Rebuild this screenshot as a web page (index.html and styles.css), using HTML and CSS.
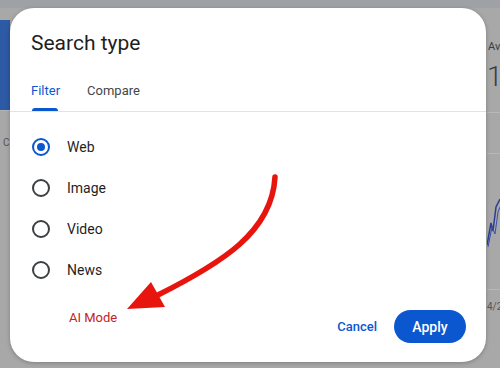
FILE: index.html
```html
<!DOCTYPE html>
<html>
<head>
  <title>Search type</title>
  <link rel="stylesheet" href="styles.css">
</head>
<body>
  <div class="backdrop">
    <div class="topbar"></div>
    <div class="main">
      <div class="left-col">
        <div class="left-header"></div>
        <div class="left-label">C</div>
      </div>
      <div class="right-col">
        <div class="stat-label">Av</div>
        <div class="stat-value">1</div>
        <div class="rule"></div>
        <div class="rule gap-lg"></div>
        <div class="chart">
          <svg width="13" height="50" viewBox="0 0 13 50">
            <path d="M0 48 L4 26 L6 34 L9 10 L13 2" fill="none" stroke="#2c3f8f" stroke-width="1.5"/>
            <path d="M1 50 L5 30 L8 37 L11 15 L13 10" fill="none" stroke="#3a4fa8" stroke-width="1"/>
          </svg>
        </div>
        <div class="rule"></div>
        <div class="axis-label">4/2</div>
      </div>
    </div>
  </div>

  <div class="dialog">
    <h2 class="title">Search type</h2>
    <div class="tabs">
      <div class="tab active">Filter</div>
      <div class="tab">Compare</div>
    </div>
    <div class="options">
      <label class="option"><span class="radio checked"></span><span class="label">Web</span></label>
      <label class="option"><span class="radio"></span><span class="label">Image</span></label>
      <label class="option"><span class="radio"></span><span class="label">Video</span></label>
      <label class="option"><span class="radio"></span><span class="label">News</span></label>
    </div>
    <div class="footer">
      <span class="ai-mode">AI Mode</span>
      <div class="actions">
        <button class="btn-text">Cancel</button>
        <button class="btn-primary">Apply</button>
      </div>
    </div>
  </div>

  <svg class="annotation" width="500" height="368" viewBox="0 0 500 368">
    <path d="M275 177 C272 232 222 263 156 296" fill="none" stroke="#e8150f" stroke-width="5.5" stroke-linecap="round"/>
    <polygon points="127,309 151,282 165,307" fill="#e8150f"/>
  </svg>
</body>
</html>
```

FILE: styles.css
```css
body { margin: 0; font-family: Roboto, "Liberation Sans", sans-serif; background: #a8a8a8; overflow: hidden; }

.backdrop { height: 368px; display: flex; flex-direction: column; }
.topbar { height: 8px; background: #9ea2a6; }
.main { flex: 1; display: flex; justify-content: space-between; }
.left-col { width: 10px; padding-top: 12px; overflow: hidden; }
.left-header { height: 90px; background: #2d5aa4; border-bottom: 1px solid #b4b4b4; }
.left-label { font-size: 10px; line-height: 12px; color: #555; padding: 26px 0 0 3px; }
.right-col { width: 13px; padding-top: 32px; color: #3c3c3c; overflow: hidden; }
.stat-label { font-size: 11px; line-height: 13px; padding-left: 1px; white-space: nowrap; }
.stat-value { font-size: 28px; line-height: 30px; margin-top: 9px; font-weight: 300; }
.rule { height: 1px; background: #b8b8b8; margin-top: 20px; }
.rule.gap-lg { margin-top: 40px; }
.chart { height: 50px; margin-top: 43px; }
.chart + .rule { margin-top: 42px; }
.axis-label { font-size: 10px; line-height: 12px; padding-top: 11px; color: #555; white-space: nowrap; }

.dialog {
  position: absolute;
  left: 10px;
  top: 8px;
  width: 476px;
  height: 354px;
  box-sizing: border-box;
  background: #fff;
  border-radius: 24px;
  box-shadow: 0 1px 4px rgba(0, 0, 0, 0.25);
  display: flex;
  flex-direction: column;
}

.title {
  margin: 0;
  padding: 21px 21px 0;
  font-size: 21px;
  line-height: 28px;
  font-weight: 400;
  color: #1f1f1f;
}

.tabs {
  display: flex;
  gap: 27px;
  margin-top: 13px;
  padding: 0 21px;
  border-bottom: 1px solid #e3e3e3;
}
.tab {
  position: relative;
  height: 41px;
  line-height: 41px;
  font-size: 13px;
  color: #444746;
}
.tab.active { color: #0b57d0; }
.tab.active::after {
  content: "";
  position: absolute;
  left: 1px;
  right: 2px;
  bottom: 0;
  height: 3px;
  border-radius: 3px 3px 0 0;
  background: #0b57d0;
}

.options { padding: 14px 21px 0; }
.option { display: flex; align-items: center; height: 41px; }
.radio {
  width: 18px;
  height: 18px;
  box-sizing: border-box;
  margin-left: 1px;
  border: 2px solid #3c4043;
  border-radius: 50%;
  display: flex;
  align-items: center;
  justify-content: center;
}
.radio.checked { border-color: #0b57d0; }
.radio.checked::before {
  content: "";
  width: 8px;
  height: 8px;
  border-radius: 50%;
  background: #0b57d0;
}
.label { margin-left: 17px; font-size: 14px; color: #1f1f1f; }

.footer {
  margin-top: auto;
  display: flex;
  justify-content: space-between;
  align-items: flex-end;
  padding: 0 20px 19px 21px;
}
.ai-mode {
  align-self: flex-start;
  margin-left: 38px;
  font-size: 13px;
  line-height: 16px;
  color: #c5221f;
}
.actions { display: flex; align-items: center; }
.btn-text {
  background: none;
  border: none;
  padding: 0;
  margin-right: 17px;
  font-family: inherit;
  font-size: 13px;
  font-weight: 500;
  color: #0b57d0;
}
.btn-primary {
  width: 72px;
  height: 33px;
  border: none;
  border-radius: 17px;
  background: #0b57d0;
  color: #fff;
  font-family: inherit;
  font-size: 14px;
  font-weight: 500;
}

.annotation { position: absolute; left: 0; top: 0; pointer-events: none; }
```
